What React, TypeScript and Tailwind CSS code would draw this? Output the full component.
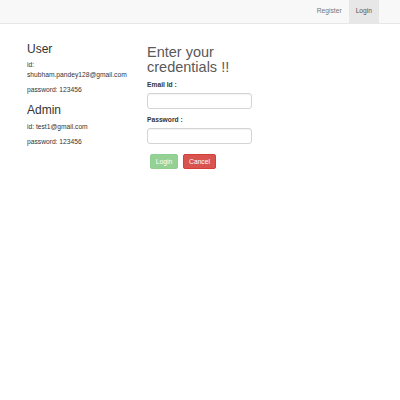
export default function App() {
    return (
        <div className="min-h-[400px] w-[400px] bg-white font-['Liberation_Sans',Arial,sans-serif] text-[6.7px] text-[#333]">
            {/* navbar */}
            <nav className="flex h-[24px] justify-end border-b border-[#e7e7e7] bg-[#f8f8f8] pr-[21px]">
                <a className="flex items-center px-[7px] text-[#777]">Register</a>
                <a className="flex h-[23px] items-center bg-[#e7e7e7] px-[7px] text-[#555]">Login</a>
            </nav>

            <div className="flex pl-[27px] pt-[19px]">
                <div className="mr-[18px] w-[102px] leading-[10px]">
                    <h3 className="text-[12px] leading-[13.2px]">User</h3>
                    <p className="mt-[4px]">id: shubham.pandey128@gmail.com</p>
                    <p className="mt-[5px]">password: 123456</p>

                    <h3 className="mt-[9px] text-[12px] leading-[13.2px]">Admin</h3>
                    <p className="mt-[4.5px]">id: test1@gmail.com</p>
                    <p className="mt-[5px]">password: 123456</p>
                </div>

                <div className="w-[105px] pt-[1.6px] leading-[10px]">
                    <h1 className="text-[14.5px] leading-[15px] text-[#595959]">
                        Enter your credentials !!
                    </h1>

                    <label className="mt-[5px] block font-bold">Email Id :</label>
                    <input
                        type="text"
                        className="mt-[3px] block h-[16px] w-full rounded-[3px] border border-[#d4d4d4] bg-white shadow-[inset_0_1px_1px_rgba(0,0,0,0.05)]"
                    />

                    <label className="mt-[6.5px] block font-bold">Password :</label>
                    <input
                        type="password"
                        className="mt-[2.5px] block h-[16px] w-full rounded-[3px] border border-[#d4d4d4] bg-white shadow-[inset_0_1px_1px_rgba(0,0,0,0.05)]"
                    />

                    <div className="mt-[10.5px] flex gap-[5px] pl-[3px]">
                        <button className="h-[15px] w-[28px] rounded-[2px] border border-[#8fcf8f] bg-[#95d195] text-white">
                            Login
                        </button>
                        <button className="h-[15px] w-[33px] rounded-[2px] border border-[#d43f3a] bg-[#d9534f] text-white">
                            Cancel
                        </button>
                    </div>
                </div>
            </div>
        </div>
    )
}
